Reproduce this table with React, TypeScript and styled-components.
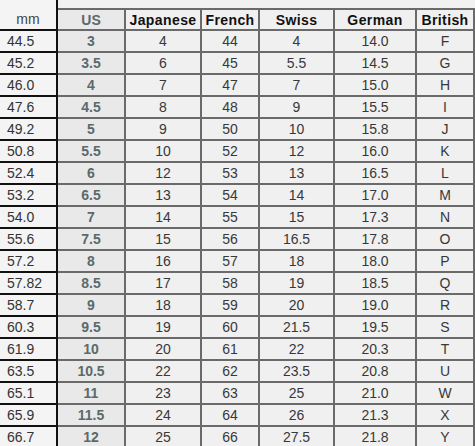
import React from "react";
import styled, { createGlobalStyle } from "styled-components";

const Global = createGlobalStyle`
  html, body { margin: 0; padding: 0; background: #f0f0f0; overflow: hidden; }
  body { font-family: "Liberation Sans", Arial, sans-serif; }
`;

const Grid = styled.div`
  display: grid;
  grid-template-columns: 58px 68px 76px 58px 75px 82px 1fr;
  grid-template-rows: 8px 23px;
  grid-auto-rows: 22px;
  width: 475px;
  background: #f0f0f0;
`;

const TopStrip = styled.div`
  grid-column: 2 / -1;
  grid-row: 1;
  background: #f1f1f1;
`;

const MmHead = styled.div`
  grid-column: 1;
  grid-row: 1 / 3;
  box-sizing: border-box;
  border-right: 2px solid #111;
  border-bottom: 2px solid #111;
  background: #f4f4f4;
  display: flex;
  align-items: center;
  justify-content: center;
  padding-top: 8px;
  font-size: 14px;
  color: #444;
`;

const Head = styled.div<{ $us?: boolean }>`
  box-sizing: border-box;
  border-top: 2px solid #6a6a6a;
  border-right: 2px solid #6a6a6a;
  border-bottom: 2px solid #6a6a6a;
  background: ${(p) => (p.$us ? "#e9e9e9" : "#f0f0f0")};
  display: flex;
  align-items: center;
  justify-content: center;
  font-size: 14px;
  font-weight: bold;
  letter-spacing: ${(p) => (p.$us ? "0" : "0.4px")};
  color: ${(p) => (p.$us ? "#5b6a6a" : "#111")};
`;

const MmCell = styled.div`
  box-sizing: border-box;
  border-right: 2px solid #111;
  border-bottom: 2px solid #111;
  background: #f4f4f4;
  display: flex;
  align-items: center;
  padding-left: 7px;
  font-size: 14px;
  color: #333;
`;

const Cell = styled.div<{ $us?: boolean }>`
  box-sizing: border-box;
  border-right: 2px solid #6a6a6a;
  border-bottom: 2px solid #6a6a6a;
  background: ${(p) => (p.$us ? "#e9e9e9" : "#f0f0f0")};
  display: flex;
  align-items: center;
  justify-content: center;
  font-size: 14px;
  font-weight: ${(p) => (p.$us ? "bold" : "normal")};
  color: ${(p) => (p.$us ? "#5b6a6a" : "#383838")};
`;

const rows: string[][] = [
  ["44.5", "3", "4", "44", "4", "14.0", "F"],
  ["45.2", "3.5", "6", "45", "5.5", "14.5", "G"],
  ["46.0", "4", "7", "47", "7", "15.0", "H"],
  ["47.6", "4.5", "8", "48", "9", "15.5", "I"],
  ["49.2", "5", "9", "50", "10", "15.8", "J"],
  ["50.8", "5.5", "10", "52", "12", "16.0", "K"],
  ["52.4", "6", "12", "53", "13", "16.5", "L"],
  ["53.2", "6.5", "13", "54", "14", "17.0", "M"],
  ["54.0", "7", "14", "55", "15", "17.3", "N"],
  ["55.6", "7.5", "15", "56", "16.5", "17.8", "O"],
  ["57.2", "8", "16", "57", "18", "18.0", "P"],
  ["57.82", "8.5", "17", "58", "19", "18.5", "Q"],
  ["58.7", "9", "18", "59", "20", "19.0", "R"],
  ["60.3", "9.5", "19", "60", "21.5", "19.5", "S"],
  ["61.9", "10", "20", "61", "22", "20.3", "T"],
  ["63.5", "10.5", "22", "62", "23.5", "20.8", "U"],
  ["65.1", "11", "23", "63", "25", "21.0", "W"],
  ["65.9", "11.5", "24", "64", "26", "21.3", "X"],
  ["66.7", "12", "25", "66", "27.5", "21.8", "Y"],
];

const heads = ["US", "Japanese", "French", "Swiss", "German", "British"];

export default function App() {
  return (
    <>
      <Global />
      <Grid>
        <MmHead>mm</MmHead>
        <TopStrip />
        {heads.map((h, i) => (
          <Head key={h} $us={i === 0}>
            {h}
          </Head>
        ))}
        {rows.map((r) => (
          <React.Fragment key={r[0]}>
            <MmCell>{r[0]}</MmCell>
            {r.slice(1).map((v, i) => (
              <Cell key={i} $us={i === 0}>
                {v}
              </Cell>
            ))}
          </React.Fragment>
        ))}
      </Grid>
    </>
  );
}
